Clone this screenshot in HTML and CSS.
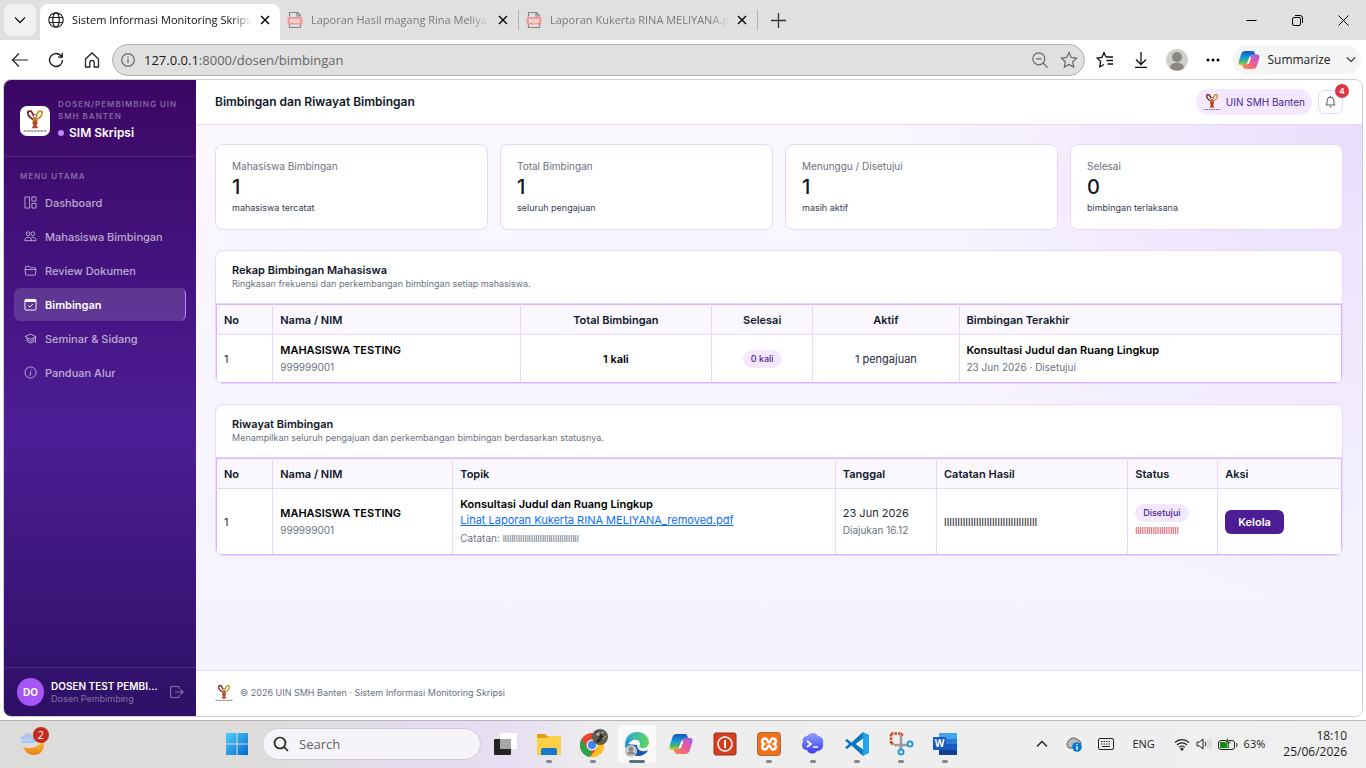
FILE: index.html
```
<!DOCTYPE html>
<html lang="id">
<head>
	<meta charset="utf-8">
	<meta name="viewport" content="width=device-width, initial-scale=1">
	<title>Sistem Informasi Monitoring Skripsi</title>
	<link rel="stylesheet" href="styles.css">
</head>
<body>

<!-- shared drawings -->
<svg class="defs" aria-hidden="true">
	<defs>
		<symbol id="campus" viewBox="0 0 18 18">
			<path d="M4 1.500C2.500 4.500 5.500 7 9 8.500M4 1.500l2.200.3L10.500 9" fill="none" stroke="#8b1a1a" stroke-width="1.300"/>
			<path d="M14 1.500c1.500 3-1.500 5.500-5 7M14 1.500l-2.200.3L7.500 9" fill="none" stroke="#c9961a" stroke-width="1.300"/>
			<path d="M7.500 5.500 9 4l1.500 1.500L9 7z" fill="#fff" stroke="#7a1f1f" stroke-width=".6"/>
			<path d="M7.500 9h3l.5 2-1 1 1.500 2.500h-5L8 12l-1-1z" fill="#b5432c"/>
			<path d="M.5 16.500h17" stroke="#8a8a8a" stroke-dasharray="2 .5"/>
		</symbol>
		<symbol id="pdf" viewBox="0 0 16 16">
			<path d="M2.500 4.500v-4h8l3 3v1M2.500 12v3.500h11V12M10 .5v3.500h3.500" fill="none" stroke="#858585" stroke-width="1.200"/>
			<rect x=".5" y="5" width="15" height="7.500" rx="1" fill="#f19a9a"/>
			<text x="8" y="11" font-size="5.500" font-weight="700" text-anchor="middle" fill="#fff" font-family="Open Sans, sans-serif">PDF</text>
		</symbol>
		<symbol id="close" viewBox="0 0 10 10"><path d="m1 1 8 8M9 1 1 9" fill="none" stroke="currentColor" stroke-width="1.400"/></symbol>
		<symbol id="chevron" viewBox="0 0 12 8"><path d="m1 1.500 5 5 5-5" fill="none" stroke="currentColor" stroke-width="1.300"/></symbol>
		<symbol id="copilot" viewBox="0 0 24 22">
			<path d="M8 1h8c1.500 0 2 1 2.500 2.500L19.500 6H15c-1.500 0-2.200 1-2.600 2.300L10.500 14c-.6 2-1.500 3-3.500 3H3c-2.500 0-3-2-2.300-4.300L3.500 4C4.200 2 5.500 1 8 1z" fill="url(#cpA)"/>
			<path d="M16 21H8c-1.500 0-2-1-2.500-2.500L4.500 16H9c1.500 0 2.200-1 2.600-2.300L13.500 8c.6-2 1.500-3 3.500-3h4c2.500 0 3 2 2.300 4.300L20.500 18c-.7 2-2 3-4.500 3z" fill="url(#cpB)"/>
			<path d="m13.300 8.500-2.500 6.500" stroke="#fff" stroke-width="2"/>
		</symbol>
		<linearGradient id="cpA" x1="0" y1="0" x2="0" y2="1"><stop offset="0" stop-color="#1553c0"/><stop offset=".45" stop-color="#129bd5"/><stop offset=".75" stop-color="#46b877"/><stop offset="1" stop-color="#f2cf1b"/></linearGradient>
		<linearGradient id="cpB" x1="1" y1="0" x2="0" y2="1"><stop offset="0" stop-color="#9a5af0"/><stop offset=".5" stop-color="#ee5d93"/><stop offset="1" stop-color="#fb8a3c"/></linearGradient>
		<linearGradient id="win" x1="0" y1="0" x2="1" y2="1"><stop offset="0" stop-color="#4fd0fb"/><stop offset="1" stop-color="#0068cf"/></linearGradient>
		<linearGradient id="edgeA" x1="0" y1="0" x2="1" y2="0"><stop offset="0" stop-color="#20a6e0"/><stop offset="1" stop-color="#63d957"/></linearGradient>
		<linearGradient id="moon" x1="0" y1="0" x2="0" y2="1"><stop offset="0" stop-color="#ffcf48"/><stop offset="1" stop-color="#ee7a16"/></linearGradient>
		<linearGradient id="cloud" x1="0" y1="0" x2="0" y2="1"><stop offset="0" stop-color="#8f9ffb"/><stop offset="1" stop-color="#3a3cf0"/></linearGradient>
	</defs>
</svg>

<header class="browser">
	<div class="tabstrip">
		<button class="tab-menu" aria-label="Tab actions"><svg width="12" height="8"><use href="#chevron"/></svg></button>
		<div class="tab active">
			<svg width="16" height="16" viewBox="0 0 16 16" fill="none" stroke="#222" stroke-width="1.200"><circle cx="8" cy="8" r="7.200"/><ellipse cx="8" cy="8" rx="3.300" ry="7.200"/><path d="M1.500 5.500h13M1.500 10.500h13"/></svg>
			<span class="tab-title">Sistem Informasi Monitoring Skrips</span>
			<button aria-label="Close tab"><svg width="10" height="10"><use href="#close"/></svg></button>
		</div>
		<div class="tab">
			<svg width="16" height="16"><use href="#pdf"/></svg>
			<span class="tab-title">Laporan Hasil magang Rina Meliya</span>
			<button aria-label="Close tab"><svg width="10" height="10"><use href="#close"/></svg></button>
		</div>
		<div class="tab">
			<svg width="16" height="16"><use href="#pdf"/></svg>
			<span class="tab-title">Laporan Kukerta RINA MELIYANA.p</span>
			<button aria-label="Close tab"><svg width="10" height="10"><use href="#close"/></svg></button>
		</div>
		<button class="new-tab" aria-label="New tab"><svg width="15" height="15" viewBox="0 0 15 15"><path d="M7.500 0v15M0 7.500h15" stroke="#333" stroke-width="1.300"/></svg></button>
		<div class="window-buttons">
			<button aria-label="Minimize"><svg width="11" height="11" viewBox="0 0 11 11"><path d="M.5 5.500h10" stroke="#000"/></svg></button>
			<button aria-label="Restore"><svg width="11" height="11" viewBox="0 0 11 11" fill="none" stroke="#000"><rect x=".5" y="2.500" width="8" height="8" rx="1.500"/><path d="M3 .5h5a2.500 2.500 0 0 1 2.500 2.500v5"/></svg></button>
			<button aria-label="Close"><svg width="11" height="11" viewBox="0 0 11 11"><path d="m.5.5 10 10M10.500.5l-10 10" stroke="#000"/></svg></button>
		</div>
	</div>
	<div class="toolbar">
		<button aria-label="Back"><svg width="18" height="16" viewBox="0 0 18 16" fill="none" stroke="#222" stroke-width="1.200"><path d="M17 8H1.500M8 1.500 1.500 8 8 14.500"/></svg></button>
		<button aria-label="Refresh"><svg width="16" height="16" viewBox="0 0 16 16" fill="none" stroke="#111" stroke-width="1.300"><path d="M14.500 8A6.500 6.500 0 1 1 12.500 3.300L14 5M14.200 1v4.200H10"/></svg></button>
		<button aria-label="Home"><svg width="16" height="16" viewBox="0 0 16 16" fill="none" stroke="#222" stroke-width="1.300"><path d="M1.500 7 8 1l6.500 6v8h-4.300v-4.500a2.200 2.200 0 0 0-4.400 0V15H1.500z"/></svg></button>
		<div class="address">
			<svg width="14" height="14" viewBox="0 0 14 14" fill="none" stroke="#666" stroke-width="1.200"><circle cx="7" cy="7" r="6.300"/><path d="M7 6v4.200M7 3.500v1.400"/></svg>
			<span class="url"><b>127.0.0.1</b>:8000/dosen/bimbingan</span>
			<svg width="16" height="16" viewBox="0 0 16 16" fill="none" stroke="#666" stroke-width="1.200"><circle cx="6.800" cy="6.800" r="6"/><path d="m11.200 11.200 4.300 4.300M4 6.800h5.600"/></svg>
			<svg width="18" height="18" viewBox="0 0 18 18" fill="none" stroke="#666" stroke-width="1.200"><path d="m9 1.500 2.300 4.900 5.300.7-3.900 3.700 1 5.300L9 13.500l-4.700 2.600 1-5.300L1.400 7.100l5.300-.7z"/></svg>
		</div>
		<button aria-label="Favorites"><svg width="18" height="18" viewBox="0 0 18 18" fill="none" stroke="#111" stroke-width="1.300"><path d="M10 6 8 1.800 5.900 6.300l-4.700.7 3.400 3.400-.9 5.400L8 13.500M10 6h7M10.500 9.500H17M11.500 13H17"/></svg></button>
		<button aria-label="Downloads"><svg width="14" height="16" viewBox="0 0 14 16" fill="none" stroke="#111" stroke-width="1.300"><path d="M7 0v12M2 7.500l5 5 5-5M1 15.300h12"/></svg></button>
		<button aria-label="Profile"><svg width="22" height="22" viewBox="0 0 22 22"><circle cx="11" cy="11" r="11" fill="#d1cfcb"/><circle cx="11" cy="8" r="5" fill="#8a8784"/><path d="M4 19a7 5.500 0 0 1 14 0 11 11 0 0 1-14 0z" fill="#8a8784"/></svg></button>
		<button aria-label="Settings"><svg width="14" height="4" viewBox="0 0 14 4"><circle cx="2" cy="2" r="1.500"/><circle cx="7" cy="2" r="1.500"/><circle cx="12" cy="2" r="1.500"/></svg></button>
		<button class="summarize"><svg width="22" height="20"><use href="#copilot"/></svg><span>Summarize</span><svg width="10" height="7"><use href="#chevron"/></svg></button>
	</div>
</header>

<div class="page">
	<aside class="sidebar">
		<div class="brand">
			<div class="brand-logo"><svg width="24" height="24"><use href="#campus"/></svg></div>
			<div>
				<div class="brand-role">Dosen/Pembimbing UIN<br>SMH Banten</div>
				<div class="brand-name">SIM Skripsi</div>
			</div>
		</div>
		<nav class="menu">
			<div class="menu-title">Menu Utama</div>
			<a href="#"><svg viewBox="0 0 14 14"><path d="M1 1h5v12H1zM8.500 1H13v4.500H8.500zM8.500 8H13v5H8.500z"/></svg>Dashboard</a>
			<a href="#"><svg viewBox="0 0 14 14"><circle cx="4.500" cy="4" r="2"/><circle cx="9.500" cy="4" r="2"/><path d="M1 11.500c0-2.500 1.200-3.700 3.500-3.700S8 9 8 11.500zM8 8c3-.6 5 .8 5 3.500H8"/></svg>Mahasiswa Bimbingan</a>
			<a href="#"><svg viewBox="0 0 14 14"><path d="M1.500 6V3.500a1 1 0 0 1 1-1h3L7 4h4.500a1 1 0 0 1 1 1v1M1 6h12l-.7 5a1 1 0 0 1-1 1H2.700a1 1 0 0 1-1-1z"/></svg>Review Dokumen</a>
			<a href="#" class="active"><svg viewBox="0 0 14 14"><rect x="1" y="1.500" width="12" height="11.500" rx="1"/><path d="M1 3h12" stroke-width="2.500"/><path d="m4.800 8 1.700 1.700L9.500 6.500"/></svg>Bimbingan</a>
			<a href="#"><svg viewBox="0 0 14 14"><path d="M1 5l6-2.800L13 5 7 7.800zM3.500 6.500v3.700c2 2 5 2 7 0V6.500M12.300 5.500V12M4 8.500l3 1.500 3-1.500"/></svg>Seminar &amp; Sidang</a>
			<a href="#"><svg viewBox="0 0 14 14"><circle cx="7" cy="7" r="6"/><path d="M7.300 6 6.600 10.500M7.500 3.500v1.200"/></svg>Panduan Alur</a>
		</nav>
		<div class="user">
			<div class="avatar">DO</div>
			<div class="user-text">
				<div class="user-name">DOSEN TEST PEMBIMBING</div>
				<div class="user-role">Dosen Pembimbing</div>
			</div>
			<button aria-label="Keluar"><svg width="14" height="12" viewBox="0 0 14 12" fill="none" stroke="currentColor" stroke-width="1.200"><path d="M9 3V1.500a1 1 0 0 0-1-1H1.500a1 1 0 0 0-1 1v9a1 1 0 0 0 1 1H8a1 1 0 0 0 1-1V9M5 6h8M10.500 3.500 13 6l-2.500 2.500"/></svg></button>
		</div>
	</aside>

	<div class="main">
		<header class="topbar">
			<h1>Bimbingan dan Riwayat Bimbingan</h1>
			<div class="campus-pill"><svg width="18" height="18"><use href="#campus"/></svg>UIN SMH Banten</div>
			<button class="bell" aria-label="Notifikasi">
				<svg width="11" height="12" viewBox="0 0 11 12" fill="none" stroke="#4a5568"><path d="M1 9c1.200-1.200 1-2.500 1.200-4.500a3.300 3.300 0 0 1 6.600 0C9 6.500 8.800 7.800 10 9zM4.500 11h2M5.500 0v1.500"/></svg>
				<span class="badge">4</span>
			</button>
		</header>

		<main class="content">
			<div class="stats">
				<div class="stat"><div class="stat-label">Mahasiswa Bimbingan</div><div class="stat-value">1</div><div class="stat-note">mahasiswa tercatat</div></div>
				<div class="stat"><div class="stat-label">Total Bimbingan</div><div class="stat-value">1</div><div class="stat-note">seluruh pengajuan</div></div>
				<div class="stat"><div class="stat-label">Menunggu / Disetujui</div><div class="stat-value">1</div><div class="stat-note">masih aktif</div></div>
				<div class="stat"><div class="stat-label">Selesai</div><div class="stat-value">0</div><div class="stat-note">bimbingan terlaksana</div></div>
			</div>

			<section class="panel">
				<div class="panel-head">
					<h2>Rekap Bimbingan Mahasiswa</h2>
					<p>Ringkasan frekuensi dan perkembangan bimbingan setiap mahasiswa.</p>
				</div>
				<table class="recap">
					<thead>
						<tr><th class="no">No</th><th class="name">Nama / NIM</th><th class="total center">Total Bimbingan</th><th class="done center">Selesai</th><th class="open center">Aktif</th><th>Bimbingan Terakhir</th></tr>
					</thead>
					<tbody>
						<tr>
							<td>1</td>
							<td><strong>MAHASISWA TESTING</strong><small>999999001</small></td>
							<td class="center"><strong>1 kali</strong></td>
							<td class="center"><span class="pill">0 kali</span></td>
							<td class="center">1 pengajuan</td>
							<td><strong>Konsultasi Judul dan Ruang Lingkup</strong><small>23 Jun 2026 · Disetujui</small></td>
						</tr>
					</tbody>
				</table>
			</section>

			<section class="panel">
				<div class="panel-head">
					<h2>Riwayat Bimbingan</h2>
					<p>Menampilkan seluruh pengajuan dan perkembangan bimbingan berdasarkan statusnya.</p>
				</div>
				<table class="history">
					<thead>
						<tr><th class="no">No</th><th class="name">Nama / NIM</th><th class="topic">Topik</th><th class="date">Tanggal</th><th class="note">Catatan Hasil</th><th class="status">Status</th><th>Aksi</th></tr>
					</thead>
					<tbody>
						<tr>
							<td>1</td>
							<td><strong>MAHASISWA TESTING</strong><small>999999001</small></td>
							<td><strong>Konsultasi Judul dan Ruang Lingkup</strong><a href="#">Lihat Laporan Kukerta RINA MELIYANA_removed.pdf</a><small>Catatan: <span class="remark">lllllllllllllllllllllllllllllllllll</span></small></td>
							<td>23 Jun 2026<small>Diajukan 16.12</small></td>
							<td>lllllllllllllllllllllllllllllllllll</td>
							<td><span class="pill">Disetujui</span><small class="danger">llllllllllllllllllll</small></td>
							<td><button class="manage">Kelola</button></td>
						</tr>
					</tbody>
				</table>
			</section>
		</main>

		<footer class="page-footer">
			<svg width="18" height="18"><use href="#campus"/></svg>
			<span>© 2026 UIN SMH Banten · Sistem Informasi Monitoring Skripsi</span>
		</footer>
	</div>
</div>

<footer class="taskbar">
	<div class="widgets">
		<button aria-label="Weather">
			<svg width="28" height="28" viewBox="0 0 28 28">
				<path d="M4 17c2 5 6 8 11 8 6 0 10-5 10-10 0-3-1-5-3-6 1 6-7 11-18 8z" fill="url(#moon)"/>
				<path d="M5 13a3.500 3.500 0 0 1 0-7 4.500 4.500 0 0 1 8-1 4 4 0 0 1 1 8z" fill="#a9c6ee"/>
				<path d="M2 10h10" stroke="#d4e3f8"/>
			</svg>
			<span class="badge">2</span>
		</button>
	</div>
	<div class="apps">
		<button aria-label="Start"><svg width="24" height="24" viewBox="0 0 24 24" fill="url(#win)"><path d="M1 1h10.500v10.500H1zM12.500 1H23v10.500H12.500zM1 12.500h10.500V23H1zM12.500 12.500H23V23H12.500z"/></svg></button>
		<label class="search">
			<svg width="16" height="16" viewBox="0 0 16 16" fill="none" stroke="#222" stroke-width="1.700"><circle cx="7" cy="7" r="5.500"/><path d="m11 11 4 4"/></svg>
			<input type="text" placeholder="Search" aria-label="Search">
		</label>
		<button aria-label="Task view"><svg width="24" height="24" viewBox="0 0 24 24"><rect x="1" y="7" width="17" height="16" rx="1" fill="#242424"/><rect x="7" y="1" width="17" height="16" rx="1" fill="#fff" opacity=".92"/><path d="M7 7h11v10H7z" fill="#a8a8a8"/></svg></button>
		<button class="running" aria-label="File Explorer"><svg width="26" height="24" viewBox="0 0 26 24"><path d="M1 2h8l2 2h14v18H1z" fill="#e0a10e"/><path d="M1 6h10l2-2h12v19H1z" fill="#ffcf48"/><path d="M5 23v-5q0-2 2-2h12q2 0 2 2v5z" fill="#1379cd"/></svg></button>
		<button class="running" aria-label="Chrome"><svg width="30" height="30" viewBox="0 0 30 30"><circle cx="14" cy="16" r="12" fill="#e94335"/><path d="M3.600 10 9 19l5 3-2 6A12 12 0 0 1 3.600 10z" fill="#2ba24c"/><path d="M26 14a12 12 0 0 1-14 14l7-9-5-9h11z" fill="#fcc31e"/><circle cx="14" cy="16" r="5.500" fill="#fff"/><circle cx="14" cy="16" r="4.300" fill="#4285f4"/><circle cx="22" cy="8" r="8" fill="#5f5c50"/><path d="M18 3 24 8 19 13" fill="none" stroke="#2d2925" stroke-width="3"/><circle cx="20" cy="5" r="2" fill="#a9a496"/><path d="M24 10l4-3M23 4l3-1" stroke="#c3bfae"/></svg></button>
		<button class="running current" aria-label="Edge"><svg width="26" height="26" viewBox="0 0 26 26"><path d="M2 13c1 7 5 12 12 12 4 0 8-2 10-6-6 3-11 0-11-5z" fill="#155aa6"/><path d="M1 14C1 6 6 1 13 1s12 5 12 10c0 4-3 6-6 6-4 0-4-2-3-4 0-4-4-5-7-4-5 1-8 4-8 5z" fill="url(#edgeA)"/><path d="M9 9c-5 2-8 8-4 13-4-3-5-8-3-11 2-2 4-3 7-2z" fill="#2399dc"/><circle cx="7" cy="20" r="6" fill="#c9c9c9"/><circle cx="7" cy="18" r="2.500" fill="#888"/><path d="M3 23.500a4 3 0 0 1 8 0z" fill="#888"/></svg></button>
		<button aria-label="Copilot"><svg width="24" height="22"><use href="#copilot"/></svg></button>
		<button aria-label="Power"><svg width="24" height="24" viewBox="0 0 24 24"><rect x="1" y="1" width="22" height="22" rx="2" fill="#d93d20" stroke="#9e2c17"/><circle cx="12" cy="12" r="7" fill="none" stroke="#fff" stroke-width="1.600"/><path d="M12 8v8" stroke="#fff" stroke-width="2"/></svg></button>
		<button class="running" aria-label="XAMPP"><svg width="24" height="24" viewBox="0 0 24 24"><rect x=".5" y=".5" width="23" height="23" rx="3" fill="#f0721d" stroke="#a6673e"/><path d="M8 6.500c3 0 2 4 4 4s1-4 4-4 4 4 1 5.500c3 1.500 2 5.500-1 5.500s-2-4-4-4-1 4-4 4-4-4-1-5.500c-3-1.500-2-5.500 1-5.500z" fill="none" stroke="#fff" stroke-width="2.500"/></svg></button>
		<button class="running" aria-label="Terminal"><svg width="24" height="24" viewBox="0 0 24 24"><path d="M6 4c3-4 9-4 11 0 4 0 6 4 5 7 1 5-2 8-6 8-3 4-9 3-10-1-5 0-6-6-4-8-1-3 1-6 4-6z" fill="url(#cloud)"/><path d="m6 9 4 3-4 3M12 15h5" fill="none" stroke="#fff" stroke-width="1.700"/></svg></button>
		<button class="running" aria-label="VS Code"><svg width="26" height="26" viewBox="0 0 26 26"><path d="M19 1l6 3v18l-6 3z" fill="#22a5ee"/><path d="M19 1 7.500 11.500 3 8 1 9.500 5 13l-4 3.500L3 18l4.500-3.500L19 25v-6.500L11.500 13 19 7.500z" fill="#0877bd"/></svg></button>
		<button class="running" aria-label="Snipping Tool"><svg width="26" height="26" viewBox="0 0 26 26"><path d="M3 2.500h11M3 12.500V2.500M14 2.500v3M3 12.500h3" fill="none" stroke="#d54322" stroke-width="2.500" stroke-dasharray="2.500 1"/><path d="M13 4v14M6 14h14" stroke="#9a9a9a" stroke-width="2.500"/><g fill="none" stroke="#299bd8" stroke-width="2"><circle cx="13" cy="21" r="2.500"/><circle cx="22" cy="13" r="2.500"/></g></svg></button>
		<button class="running" aria-label="Word"><svg width="26" height="24" viewBox="0 0 26 24"><path d="M7 1h18v6H7z" fill="#41a5ee"/><path d="M7 7h18v5H7z" fill="#2b7cd3"/><path d="M7 12h18v6H7z" fill="#185abd"/><path d="M7 18h18v5H7z" fill="#103f91"/><rect x="1" y="5" width="13" height="13" rx="1" fill="#185abd"/><text x="7.500" y="15" text-anchor="middle" font-size="10" font-weight="700" font-family="Open Sans, sans-serif" fill="#fff">W</text></svg></button>
	</div>
	<div class="tray">
		<button aria-label="Hidden icons"><svg class="up" width="12" height="8"><use href="#chevron"/></svg></button>
		<button aria-label="OneDrive"><svg width="16" height="16" viewBox="0 0 16 16"><path d="M3 12a4 4 0 0 1-1-6 6 6 0 0 1 10-2q3 1 3 4l-3 4z" fill="#b8b8b8" stroke="#555"/><circle cx="11" cy="11" r="4.800" fill="#0b78d4"/><path d="M11 10v4M11 8v1" stroke="#fff" stroke-width="1.300"/></svg></button>
		<button aria-label="Keyboard"><svg width="16" height="12" viewBox="0 0 16 12" fill="none" stroke="#222"><rect x=".5" y=".5" width="15" height="11" rx="1.500"/><path d="M3 3.500h10M3 6h10" stroke-dasharray="1.500 1"/><path d="M4 8.500h8"/></svg></button>
		<button class="lang">ENG</button>
		<button class="system" aria-label="Network, volume and battery">
			<svg width="16" height="14" viewBox="0 0 16 14" fill="none" stroke="#222" stroke-width="1.200"><path d="M1 5.500a10 10 0 0 1 14 0M3 8a7 7 0 0 1 10 0M5.200 10.200a4 4 0 0 1 5.600 0"/><circle cx="8" cy="12" r="1" fill="#222"/></svg>
			<svg width="16" height="14" viewBox="0 0 16 14" fill="none" stroke="#222"><path d="M1 5h2.500L7 2v10L3.500 9H1zM9 5a3 3 0 0 1 0 4"/><path d="M11 3.500a5 5 0 0 1 0 7M13 2a7 7 0 0 1 0 10" stroke="#bbb"/></svg>
			<svg width="20" height="14" viewBox="0 0 20 14" fill="none" stroke="#222"><rect x=".5" y="3.500" width="16" height="9" rx="2.500"/><path d="M2 5h9v6H2z" fill="#128a12" stroke="none"/><path d="M18 6q1 0 1 2t-1 2"/><path d="M10 0 7 5.500h3L9 10l4-5.500h-3z" fill="#222" stroke="#eee" stroke-width=".5"/></svg>
			<span>63%</span>
		</button>
		<div class="clock"><time>18:10</time><br><time>25/06/2026</time></div>
	</div>
</footer>

</body>
</html>
```
FILE: styles.css
```
* {
	box-sizing: border-box;
}

body {
	margin: 0;
	min-height: 100vh;
	display: flex;
	flex-direction: column;
	background: #fff;
	color: #0f172a;
	font-family: Inter, sans-serif;
	font-size: 11px;
	line-height: 16px;
}

button {
	padding: 0;
	border: 0;
	background: none;
	color: inherit;
	font: inherit;
	display: flex;
	align-items: center;
	justify-content: center;
	flex: none;
}

svg {
	display: block;
	flex: none;
}

.defs {
	position: absolute;
	width: 0;
	height: 0;
}

/* browser */
.browser,
.taskbar {
	font-family: "Open Sans", "Noto Sans", sans-serif;
	font-size: 12px;
	color: #1b1b1b;
}

.tabstrip {
	display: flex;
	align-items: center;
	height: 40px;
	padding-left: 4px;
	background: #e0e0e0;
}

.tab-menu {
	width: 32px;
	height: 32px;
	margin-right: 4px;
	border-radius: 8px;
	background: #f2f2f2;
}

.tab {
	flex: 0 1 239px;
	min-width: 0;
	display: flex;
	align-items: center;
	gap: 8px;
	height: 20px;
	padding: 0 10px 0 7px;
	border-right: 1px solid #b0b0b0;
	color: #7a7a7a;
	font-size: 11px;
}

.tab.active {
	flex-basis: 240px;
	align-self: flex-end;
	height: 36px;
	padding-left: 8px;
	padding-bottom: 4px;
	border: 0;
	border-radius: 8px 8px 0 0;
	background: #fff;
	color: #111;
}

.tab-title {
	flex: 1;
	overflow: hidden;
	white-space: nowrap;
	-webkit-mask-image: linear-gradient(to left, transparent, #000 20px);
	mask-image: linear-gradient(to left, transparent, #000 20px);
}

.tab button {
	color: #000;
}

.new-tab {
	width: 40px;
	height: 32px;
}

.window-buttons {
	display: flex;
	margin-left: auto;
}

.window-buttons button {
	width: 46px;
	height: 40px;
}

.toolbar {
	display: flex;
	align-items: center;
	height: 39px;
	padding: 0 5px 0 2px;
}

.toolbar > button {
	width: 36px;
	height: 32px;
}

.address {
	flex: 1;
	display: flex;
	align-items: center;
	gap: 12px;
	height: 32px;
	margin: 0 2px;
	padding: 0 6px 0 8px;
	border: 1px solid #b0b0b0;
	border-radius: 16px;
	background: #e0e0e0;
	color: #666;
}

.url {
	flex: 1;
	margin-left: -3px;
	font-size: 13px;
}

.url b {
	font-weight: 400;
	color: #1b1b1b;
}

.toolbar .summarize {
	width: 128px;
	height: 30px;
	margin-left: 2px;
	gap: 7px;
	border-radius: 15px;
	background: #f5f5f5;
}

.summarize span {
	margin-right: 8px;
}

/* page */
.page {
	flex: 1;
	display: flex;
	margin: 0 3px 3px;
	border: 1px solid #cfcfcf;
	border-radius: 8px;
	overflow: hidden;
}

.sidebar {
	flex: 0 0 192px;
	min-width: 0;
	display: flex;
	flex-direction: column;
	background: linear-gradient(180deg, #3b0764 0%, #4c1d95 55%, #2e1065 100%);
	color: #fff;
}

.brand {
	display: flex;
	align-items: center;
	gap: 8px;
	height: 77px;
	padding: 5px 16px 0;
	border-bottom: 1px solid rgba(255, 255, 255, .1);
}

.brand-logo {
	display: flex;
	align-items: center;
	justify-content: center;
	flex: none;
	width: 30px;
	height: 30px;
	border-radius: 7px;
	background: #fff;
}

.brand-role,
.menu-title {
	color: rgba(255, 255, 255, .38);
	font-size: 8px;
	font-weight: 600;
	line-height: 12px;
	letter-spacing: 1px;
	text-transform: uppercase;
	white-space: nowrap;
}

.brand-name {
	display: flex;
	align-items: center;
	gap: 5px;
	font-size: 12px;
	font-weight: 600;
	line-height: 22px;
}

.brand-name::before {
	content: "";
	width: 6px;
	height: 6px;
	border-radius: 50%;
	background: #c084fc;
}

.menu {
	flex: 1;
	display: flex;
	flex-direction: column;
	gap: 1px;
	padding: 13px 10px;
}

.menu-title {
	margin: 0 6px 3px;
}

.menu a {
	display: flex;
	align-items: center;
	gap: 8px;
	height: 33px;
	padding: 0 10px;
	border-right: 1px solid transparent;
	border-radius: 6px;
	color: rgba(255, 255, 255, .65);
	font-weight: 500;
	text-decoration: none;
}

.menu a.active {
	border-color: #c084fc;
	background: rgba(255, 255, 255, .14);
	color: #fff;
	font-weight: 600;
}

.menu svg {
	width: 13px;
	height: 13px;
	fill: none;
	stroke: currentColor;
}

.user {
	display: flex;
	align-items: center;
	gap: 7px;
	height: 49px;
	padding: 0 12px 0 13px;
	border-top: 1px solid rgba(255, 255, 255, .1);
}

.avatar {
	display: flex;
	align-items: center;
	justify-content: center;
	flex: none;
	width: 27px;
	height: 28px;
	border-radius: 50%;
	background: #a855f7;
	font-size: 10px;
	font-weight: 700;
}

.user-text {
	flex: 1;
	min-width: 0;
}

.user-name {
	overflow: hidden;
	font-size: 10px;
	font-weight: 600;
	line-height: 14px;
	text-overflow: ellipsis;
	white-space: nowrap;
}

.user-role {
	color: rgba(255, 255, 255, .4);
	font-size: 9px;
	line-height: 12px;
}

.user button {
	margin-left: 4px;
	color: rgba(255, 255, 255, .4);
}

.main {
	flex: 1;
	min-width: 0;
	display: flex;
	flex-direction: column;
}

.topbar {
	display: flex;
	align-items: center;
	gap: 6px;
	height: 45px;
	padding: 0 19px;
	border-bottom: 1px solid #e9d5ff;
	background: #fff;
}

.topbar h1 {
	flex: 1;
	margin: 0;
	font-size: 12px;
	font-weight: 600;
}

.campus-pill {
	display: flex;
	align-items: center;
	gap: 5px;
	height: 26px;
	padding: 0 7px;
	border-radius: 13px;
	background: #f3e8ff;
	color: #4c1d95;
	font-size: 10px;
}

.bell {
	position: relative;
	width: 25px;
	height: 24px;
	border: 1px solid #e9d5ff;
	border-radius: 6px;
}

.badge {
	position: absolute;
	top: -7px;
	right: -7px;
	width: 14px;
	height: 14px;
	border-radius: 50%;
	background: #dc3545;
	color: #fff;
	font-size: 8px;
	font-weight: 700;
	line-height: 14px;
	text-align: center;
}

.content {
	flex: 1;
	padding: 19px;
	background:
		radial-gradient(circle at 100% 0, #e9defc 0, rgba(233, 222, 252, 0) 480px),
		linear-gradient(180deg, #faf7ff, #f5f3ff);
}

.stats {
	display: grid;
	grid-template-columns: repeat(4, 1fr);
	gap: 12px;
	margin-bottom: 20px;
}

.stat,
.panel {
	border: 1px solid #e9d5ff;
	border-radius: 8px;
	background: #fff;
}

.stat {
	padding: 14px 16px;
}

.stat-label,
.stat-note {
	color: #6b7280;
	font-size: 10px;
	line-height: 15px;
}

.stat-value {
	font-size: 20px;
	font-weight: 500;
	line-height: 26px;
}

.stat-note {
	color: #374151;
	font-size: 9px;
}

.panel {
	margin-bottom: 20px;
	overflow: hidden;
}

.panel-head {
	padding: 11px 16px 13px;
	border-bottom: 1px solid #e9d5ff;
}

.panel h2 {
	margin: 0;
	font-size: 11px;
	font-weight: 600;
}

.panel p {
	margin: 0;
	color: #6b7280;
	font-size: 9px;
	line-height: 12px;
}

table {
	width: 100%;
	border: 1px solid #d8b4fe;
	border-collapse: collapse;
	table-layout: fixed;
}

th,
td {
	padding: 7px 7px 6px;
	border: 1px solid #e9d5ff;
	text-align: left;
}

thead th {
	border-top-color: #d8b4fe;
	background: #faf7ff;
	color: #0f172a;
	font-weight: 600;
}

tr > :first-child {
	border-left-color: #d8b4fe;
}

tr > :last-child {
	border-right-color: #d8b4fe;
}

tbody td {
	border-bottom-color: #d8b4fe;
	color: #1f2937;
}

td strong {
	display: block;
	color: #000;
	font-weight: 600;
}

td small {
	display: block;
	color: #6b7280;
	font-size: 10px;
	line-height: 18px;
}

td a {
	display: block;
	color: #0d6efd;
	line-height: 17px;
}

th.center,
td.center {
	text-align: center;
}

.no { width: 5%; }
.recap .name { width: 22%; }
.recap .total { width: 17%; }
.recap .done { width: 9%; }
.recap .open { width: 13%; }
.history .name { width: 16%; }
.history .topic { width: 34%; }
.history .date { width: 9%; }
.history .note { width: 17%; }
.history .status { width: 8%; }

.pill {
	display: inline-block;
	padding: 0 8px;
	border-radius: 9px;
	background: #f3e8ff;
	color: #4c1d95;
	font-size: 9px;
	font-weight: 500;
	line-height: 18px;
}

.remark {
	font-size: 9px;
}

td small.danger {
	color: #dc3545;
	font-size: 9px;
}

.manage {
	height: 24px;
	padding: 0 13px;
	border-radius: 6px;
	background: #4c1d95;
	color: #fff;
	font-weight: 600;
}

.page-footer {
	display: flex;
	align-items: center;
	gap: 7px;
	height: 46px;
	padding: 0 19px 2px;
	border-top: 1px solid #e9d5ff;
	background: #fff;
	color: #6b7280;
	font-size: 9px;
}

/* taskbar */
.taskbar {
	display: flex;
	align-items: center;
	height: 48px;
	padding-bottom: 1px;
	border-top: 1px solid #b5b5b5;
	background: linear-gradient(90deg, #dcdcda 0, #dedddb 20%, #e5dcef 30%, #e6def1 37%, #ededee 44%, #efefef 100%);
}

.widgets {
	flex: 0 0 215px;
	padding-left: 19px;
}

.widgets button {
	position: relative;
}

.widgets .badge {
	top: -3px;
	right: -2px;
	width: 16px;
	height: 16px;
	background: #c42b1c;
	font-size: 11px;
	font-weight: 400;
	line-height: 16px;
}

.apps {
	display: flex;
	align-items: center;
}

.apps button {
	position: relative;
	width: 44px;
	height: 38px;
}

.apps .current {
	width: 38px;
	margin: 0 3px;
	border-radius: 4px;
	background: #f9f9f9;
}

.running::after {
	content: "";
	position: absolute;
	bottom: 0;
	left: 50%;
	width: 6px;
	height: 3px;
	margin-left: -3px;
	border-radius: 2px;
	background: #858585;
}

.current::after {
	width: 16px;
	margin-left: -8px;
	background: #5a7184;
}

.search {
	display: flex;
	align-items: center;
	gap: 10px;
	width: 219px;
	height: 32px;
	margin: 0 2px 0 3px;
	padding: 0 10px;
	border: 1px solid #cfcad6;
	border-radius: 16px;
	background: #f6f4f8;
}

.search input {
	flex: 1;
	min-width: 0;
	padding: 0;
	border: 0;
	outline: 0;
	background: none;
	font: inherit;
	font-size: 13px;
}

.search input::placeholder {
	color: #5f5f5f;
}

.tray {
	display: flex;
	align-items: center;
	margin-left: auto;
	padding-right: 19px;
	font-size: 11px;
}

.tray button {
	width: 32px;
}

.tray .lang {
	width: 44px;
}

.tray .system {
	width: auto;
	gap: 6px;
	margin: 0 18px 0 8px;
}

.up {
	transform: rotate(180deg);
}

.clock {
	font-size: 12px;
	text-align: right;
}
```
